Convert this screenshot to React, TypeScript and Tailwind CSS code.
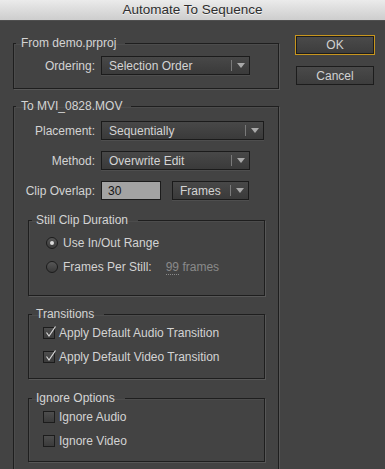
import React from "react";

const Arrow = () => (
  <svg width="8" height="5" viewBox="0 0 8 5" className="block">
    <polygon points="0,0 8,0 4,5" fill="#a9a9a9" />
  </svg>
);

function Dropdown({ text, w }: { text: string; w: string }) {
  return (
    <div
      className={`${w} h-[19px] flex items-center border border-[#1b1b1b] bg-gradient-to-b from-[#484848] to-[#3a3a3a] shadow-[0_1px_0_#4e4e4e] text-[#d4d4d4]`}
    >
      <span className="flex-1 pl-[7px] leading-none">{text}</span>
      <span className="w-px h-[11px] bg-[#7a7a7a]" />
      <span className="w-[17px] flex justify-center">
        <Arrow />
      </span>
    </div>
  );
}

function Row({ label, children }: { label: string; children: React.ReactNode }) {
  return (
    <div className="flex items-center h-[19px]">
      <div className="w-[82px] text-right pr-px">{label}</div>
      <div className="ml-[5px] flex items-center">{children}</div>
    </div>
  );
}

function Group({
  title,
  className,
  children,
  sub,
}: {
  title: string;
  className?: string;
  children: React.ReactNode;
  sub?: boolean;
}) {
  return (
    <fieldset
      className={`border border-[#1e1e1e] shadow-[1px_1px_0_#575757,inset_1px_1px_0_#4c4c4c] ${className ?? ""}`}
    >
      <legend
        className={`${sub ? "ml-[3px] pl-[4px] pr-[10px]" : "ml-[2px] pl-[5px] pr-[9px]"} leading-[14px] text-[#d4d4d4]`}
      >
        {title}
      </legend>
      {children}
    </fieldset>
  );
}

function Radio({ checked }: { checked?: boolean }) {
  return (
    <span className="w-[12px] h-[12px] rounded-full border border-[#1c1c1c] bg-gradient-to-b from-[#575757] to-[#3a3a3a] flex items-center justify-center">
      {checked && <span className="w-[4px] h-[4px] rounded-full bg-[#dcdcdc]" />}
    </span>
  );
}

function Check({ checked }: { checked?: boolean }) {
  return (
    <span className="relative w-[12px] h-[12px] border border-[#1c1c1c] bg-gradient-to-b from-[#4e4e4e] to-[#3b3b3b]">
      {checked && (
        <svg
          width="13"
          height="13"
          viewBox="0 0 13 13"
          className="absolute left-[0px] top-[-3px]"
        >
          <polyline
            points="2.5,7.5 5,11 11.5,1.5"
            fill="none"
            stroke="#d8d8d8"
            strokeWidth="1.2"
          />
        </svg>
      )}
    </span>
  );
}

export default function App() {
  return (
    <div className="w-[385px] h-[469px] overflow-hidden bg-[#434343] font-['Liberation_Sans',Arial,sans-serif] text-[12px] text-[#d3d3d3] select-none">
      <div className="h-[21px] border-b border-[#4f4f4f] bg-gradient-to-b from-[#ebebeb] to-[#cdcdcd] flex items-center justify-center text-[13.5px] text-[#2e2e2e] [text-shadow:0_1px_0_#f2f2f2]">
        Automate To Sequence
      </div>
      <div className="flex">
        <div className="pl-[13px] pt-[15px]">
          <Group title="From demo.prproj" className="w-[266px]">
            <div className="pt-[6px] pb-[13px]">
              <Row label="Ordering:">
                <Dropdown text="Selection Order" w="w-[149px]" />
              </Row>
            </div>
          </Group>
          <Group title="To MVI_0828.MOV" className="w-[266px] mt-[10px]">
            <div className="pt-[8px] pb-[40px]">
              <div className="flex flex-col gap-[11px]">
                <Row label="Placement:">
                  <Dropdown text="Sequentially" w="w-[163px]" />
                </Row>
                <Row label="Method:">
                  <Dropdown text="Overwrite Edit" w="w-[149px]" />
                </Row>
                <Row label="Clip Overlap:">
                  <div className="w-[60px] h-[19px] border border-[#1b1b1b] bg-[#a3a3a3] text-[#161616] pl-[6px] flex items-center">
                    30
                  </div>
                  <div className="ml-[11px]">
                    <Dropdown text="Frames" w="w-[77px]" />
                  </div>
                </Row>
              </div>
              <Group title="Still Clip Duration" sub className="ml-[14px] w-[237px] mt-[13px]">
                <div className="pt-[8px] pb-[20px] pl-[17px] flex flex-col gap-[8px]">
                  <div className="flex items-center h-[16px] gap-[5px]">
                    <Radio checked />
                    <span>Use In/Out Range</span>
                  </div>
                  <div className="flex items-center h-[16px] gap-[5px]">
                    <Radio />
                    <span>Frames Per Still:</span>
                    <span className="ml-[9px] text-[#8a8a8a]">
                      <span className="border-b border-dotted border-[#8a8a8a]">99</span> frames
                    </span>
                  </div>
                </div>
              </Group>
              <Group title="Transitions" sub className="ml-[14px] w-[237px] mt-[11px]">
                <div className="pt-[4px] pb-[13px] pl-[14px] flex flex-col gap-[8px]">
                  <div className="flex items-center h-[16px] gap-[4px]">
                    <Check checked />
                    <span>Apply Default Audio Transition</span>
                  </div>
                  <div className="flex items-center h-[16px] gap-[4px]">
                    <Check checked />
                    <span>Apply Default Video Transition</span>
                  </div>
                </div>
              </Group>
              <Group title="Ignore Options" sub className="ml-[14px] w-[237px] mt-[12px]">
                <div className="pt-[4px] pb-[12px] pl-[14px] flex flex-col gap-[8px]">
                  <div className="flex items-center h-[16px] gap-[4px]">
                    <Check />
                    <span>Ignore Audio</span>
                  </div>
                  <div className="flex items-center h-[16px] gap-[4px]">
                    <Check />
                    <span>Ignore Video</span>
                  </div>
                </div>
              </Group>
            </div>
          </Group>
        </div>
        <div className="ml-[16px] pt-[14px] flex flex-col">
          <div className="w-[80px] h-[20px] border border-[#c8961e]">
            <button className="w-full h-full border border-[#1c1c1c] bg-gradient-to-b from-[#4a4a4a] to-[#3d3d3d] text-[#d2d2d2] text-[12px] leading-none flex items-center justify-center">
              OK
            </button>
          </div>
          <button className="ml-px mt-[11px] w-[78px] h-[19px] border border-[#1c1c1c] bg-gradient-to-b from-[#4a4a4a] to-[#3d3d3d] text-[#d2d2d2] text-[12px] leading-none flex items-center justify-center">
            Cancel
          </button>
        </div>
      </div>
    </div>
  );
}
